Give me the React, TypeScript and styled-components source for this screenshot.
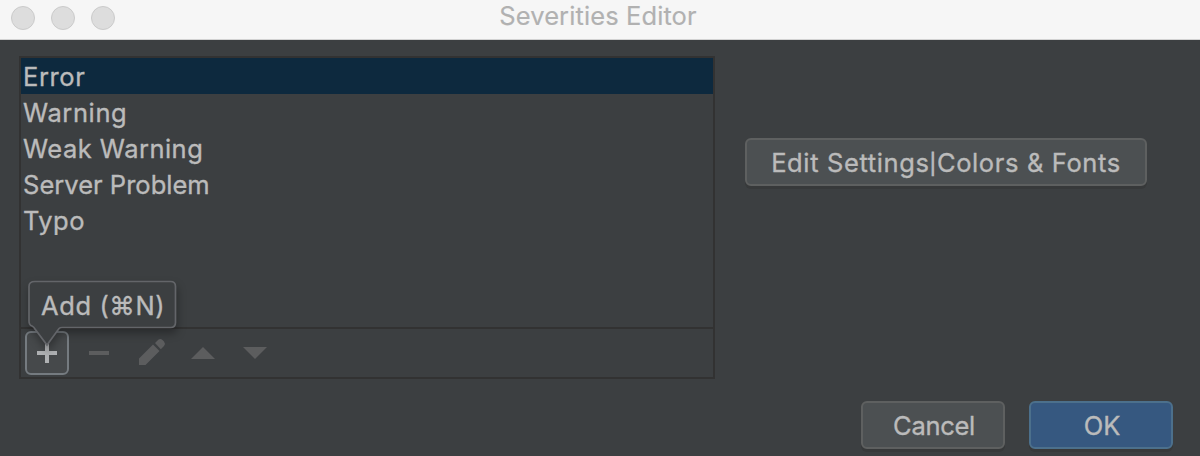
import React from "react";
import styled, { createGlobalStyle } from "styled-components";

const GlobalStyle = createGlobalStyle`
  * { box-sizing: border-box; }
  html, body { margin: 0; padding: 0; background: #3c3f41; }
  button { font: inherit; color: inherit; letter-spacing: inherit; }
`;

const Dialog = styled.div`
  width: 1200px;
  height: 456px;
  display: flex;
  flex-direction: column;
  overflow: hidden;
  background: #3c3f41;
  color: #bbbbbb;
  font-family: Inter, "Liberation Sans", sans-serif;
  font-size: 25.5px;
  line-height: 36px;
  -webkit-text-stroke: 0.35px currentColor;
`;

const TitleBar = styled.header`
  flex: none;
  height: 40px;
  display: grid;
  grid-template-columns: 1fr auto 1fr;
  align-items: center;
  background: #f6f6f6;
  border-bottom: 1px solid #d2d2d2;
`;

const WindowControls = styled.div`
  display: flex;
  gap: 16px;
  padding: 0 0 3px 11px;
`;

const WindowDot = styled.span`
  width: 24px;
  height: 24px;
  border-radius: 50%;
  background: #dddddd;
  border: 1px solid #cbcbcb;
`;

const Title = styled.h1`
  margin: 0;
  padding: 0 4px 7px 0;
  font-size: 25.5px;
  font-weight: 400;
  line-height: 32px;
  letter-spacing: 0.1px;
  color: #b1b1b1;
  -webkit-text-stroke: 0.15px currentColor;
`;

const Content = styled.main`
  flex: none;
  display: flex;
  gap: 30px;
  padding: 16px 0 0 19px;
`;

const ListPanel = styled.section`
  width: 696px;
  height: 323px;
  display: flex;
  flex-direction: column;
  border: 2px solid #323232;
`;

const SeverityList = styled.ul`
  flex: 1;
  margin: 0;
  padding: 0;
  list-style: none;
`;

const SeverityItem = styled.li<{ $selected?: boolean; $spacing: number }>`
  height: 36px;
  padding: 1px 0 0 2px;
  background: ${(p) => (p.$selected ? "#0d293e" : "transparent")};
  letter-spacing: ${(p) => p.$spacing}px;
  white-space: nowrap;
`;

const Toolbar = styled.div`
  height: 50px;
  display: flex;
  gap: 8px;
  padding: 2px 4px;
  border-top: 2px solid #323232;
`;

const ToolButton = styled.button<{ $active?: boolean }>`
  position: relative;
  width: 44px;
  height: 44px;
  padding: 0;
  border: 2px solid ${(p) => (p.$active ? "#757b80" : "transparent")};
  border-radius: 6px;
  background: ${(p) => (p.$active ? "#46494b" : "transparent")};
`;

const ToolIcon = styled.svg`
  display: block;
  width: 40px;
  height: 40px;
`;

const Tooltip = styled.div`
  position: absolute;
  left: 1px;
  top: -53px;
  width: 152px;
  height: 70px;
  padding: 8px 0 0 13px;
  text-align: left;
  white-space: nowrap;
  letter-spacing: 0.6px;
`;

const Balloon = styled.svg`
  position: absolute;
  left: 0;
  top: 0;
  overflow: visible;
  filter: drop-shadow(1px 5px 4px rgba(0, 0, 0, 0.32));
`;

const TooltipText = styled.span`
  position: relative;
`;

const PushButton = styled.button<{ $primary?: boolean; $width: number; $spacing?: number }>`
  width: ${(p) => p.$width}px;
  height: 48px;
  padding: 2px 0 0;
  border: 2px solid ${(p) => (p.$primary ? "#4c708c" : "#5e6060")};
  border-radius: 6px;
  background: ${(p) => (p.$primary ? "#365880" : "#4c5052")};
  box-shadow: 0 3px 0 #37393a;
  letter-spacing: ${(p) => p.$spacing ?? 0}px;
  white-space: nowrap;
`;

const Separator = styled.span`
  font-size: 20px;
  line-height: 1;
  vertical-align: 1px;
  -webkit-text-stroke-width: 0.8px;
`;

const SidePane = styled.aside`
  padding-top: 82px;
`;

const Footer = styled.footer`
  display: flex;
  justify-content: flex-end;
  gap: 24px;
  padding: 22px 27px 0 0;

  ${PushButton} {
    padding-left: 2px;
  }
`;

const severities = [
  { name: "Error", spacing: 0.6 },
  { name: "Warning", spacing: 0.6 },
  { name: "Weak Warning", spacing: 0.48 },
  { name: "Server Problem", spacing: 0.02 },
  { name: "Typo", spacing: 0.45 },
];

export default function App() {
  return (
    <Dialog>
      <GlobalStyle />
      <TitleBar>
        <WindowControls>
          <WindowDot />
          <WindowDot />
          <WindowDot />
        </WindowControls>
        <Title>Severities Editor</Title>
      </TitleBar>
      <Content>
        <ListPanel>
          <SeverityList>
            {severities.map((s, i) => (
              <SeverityItem key={s.name} $selected={i === 0} $spacing={s.spacing}>
                {s.name}
              </SeverityItem>
            ))}
          </SeverityList>
          <Toolbar>
            <ToolButton $active aria-label="Add">
              <ToolIcon viewBox="0 0 40 40">
                <path d="M18 10h4v8h8v4h-8v8h-4v-8h-8v-4h8z" fill="#afb1b3" />
              </ToolIcon>
              <Tooltip>
                <Balloon width="152" height="70">
                  <path
                    d="M7 1.500H142.500Q147.500 1.500 147.500 6.500V42.500Q147.500 47.500 142.500 47.500H34Q32 47.500 31 48.500L19 65L7 49Q6 47 4 46Q1 45 1 41V6.500Q1 1.500 7 1.500Z"
                    fill="#3c3f41"
                    stroke="#636569"
                    strokeWidth="1.7"
                  />
                </Balloon>
                <TooltipText>Add (⌘N)</TooltipText>
              </Tooltip>
            </ToolButton>
            <ToolButton aria-label="Remove">
              <ToolIcon viewBox="0 0 40 40">
                <path d="M10 18h20v4H10z" fill="#5c5d5e" />
              </ToolIcon>
            </ToolButton>
            <ToolButton aria-label="Edit">
              <ToolIcon viewBox="0 0 40 40">
                <path
                  d="M8 32v-6.500L22 11.500L28.500 18L14.500 32zM24 9.900L27.300 6.700Q29.500 5 31.500 7L33 8.500Q34.800 10.700 33 12.900L29.800 16.200z"
                  fill="#5c5d5e"
                />
              </ToolIcon>
            </ToolButton>
            <ToolButton aria-label="Move up">
              <ToolIcon viewBox="0 0 40 40">
                <path d="M8 26L20 14L32 26z" fill="#5c5d5e" />
              </ToolIcon>
            </ToolButton>
            <ToolButton aria-label="Move down">
              <ToolIcon viewBox="0 0 40 40">
                <path d="M8 14H32L20 26z" fill="#5c5d5e" />
              </ToolIcon>
            </ToolButton>
          </Toolbar>
        </ListPanel>
        <SidePane>
          <PushButton $width={402} $spacing={0.63}>
            Edit Settings<Separator>|</Separator>Colors &amp; Fonts
          </PushButton>
        </SidePane>
      </Content>
      <Footer>
        <PushButton $width={144} $spacing={-0.3}>
          Cancel
        </PushButton>
        <PushButton $width={144} $primary>
          OK
        </PushButton>
      </Footer>
    </Dialog>
  );
}
